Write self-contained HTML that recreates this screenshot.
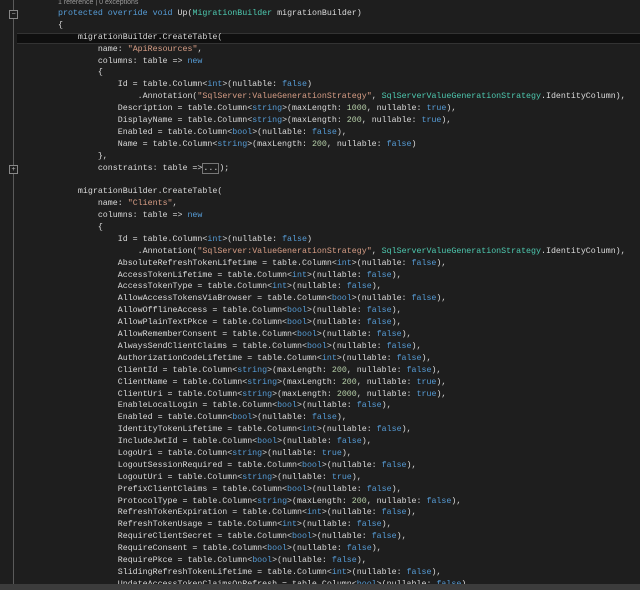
<!DOCTYPE html>
<html><head><meta charset="utf-8"><style>
html,body{margin:0;padding:0;background:#1e1e1e;width:640px;height:590px;overflow:hidden}
body{position:relative;font-family:"Liberation Mono",monospace;font-size:8.3px;color:#dadada}
.ref{position:absolute;left:58px;top:-1px;font-family:"Liberation Sans",sans-serif;font-size:7px;color:#999}
.code{position:absolute;left:58px;top:8px;white-space:pre;line-height:11.89px}
.k{color:#569cd6}.t{color:#4ec9b0}.s{color:#d69d85}.n{color:#b5cea8}
.vl{position:absolute;left:13px;top:0;width:1px;height:584px;background:#5a5a5a}
.fold{position:absolute;left:9px;width:7px;height:7px;border:1px solid #888;background:#1e1e1e;color:#bbb;font:7px/7px "Liberation Sans",sans-serif;text-align:center}
.cur{position:absolute;left:17px;top:33px;width:623px;height:9px;background:#0f0f0f;border-top:1px solid #333;border-bottom:1px solid #333}
.bot{position:absolute;left:0;top:584px;width:640px;height:6px;background:#3c3c3c}
.box{border:1px solid #777}
</style></head><body>
<div class="cur"></div>
<div class="vl"></div>
<div class="fold" style="top:10px">−</div>
<div class="fold" style="top:165px">+</div>
<div class="ref">1 reference | 0 exceptions</div>
<div class="code"><span class="k">protected</span> <span class="k">override</span> <span class="k">void</span> Up(<span class="t">MigrationBuilder</span> migrationBuilder)
{
    migrationBuilder.CreateTable(
        name: <span class="s">"ApiResources"</span>,
        columns: table =&gt; <span class="k">new</span>
        {
            Id = table.Column&lt;<span class="k">int</span>&gt;(nullable: <span class="k">false</span>)
                .Annotation(<span class="s">"SqlServer:ValueGenerationStrategy"</span>, <span class="t">SqlServerValueGenerationStrategy</span>.IdentityColumn),
            Description = table.Column&lt;<span class="k">string</span>&gt;(maxLength: <span class="n">1000</span>, nullable: <span class="k">true</span>),
            DisplayName = table.Column&lt;<span class="k">string</span>&gt;(maxLength: <span class="n">200</span>, nullable: <span class="k">true</span>),
            Enabled = table.Column&lt;<span class="k">bool</span>&gt;(nullable: <span class="k">false</span>),
            Name = table.Column&lt;<span class="k">string</span>&gt;(maxLength: <span class="n">200</span>, nullable: <span class="k">false</span>)
        },
        constraints: table =&gt;<span class="box">...</span>);

    migrationBuilder.CreateTable(
        name: <span class="s">"Clients"</span>,
        columns: table =&gt; <span class="k">new</span>
        {
            Id = table.Column&lt;<span class="k">int</span>&gt;(nullable: <span class="k">false</span>)
                .Annotation(<span class="s">"SqlServer:ValueGenerationStrategy"</span>, <span class="t">SqlServerValueGenerationStrategy</span>.IdentityColumn),
            AbsoluteRefreshTokenLifetime = table.Column&lt;<span class="k">int</span>&gt;(nullable: <span class="k">false</span>),
            AccessTokenLifetime = table.Column&lt;<span class="k">int</span>&gt;(nullable: <span class="k">false</span>),
            AccessTokenType = table.Column&lt;<span class="k">int</span>&gt;(nullable: <span class="k">false</span>),
            AllowAccessTokensViaBrowser = table.Column&lt;<span class="k">bool</span>&gt;(nullable: <span class="k">false</span>),
            AllowOfflineAccess = table.Column&lt;<span class="k">bool</span>&gt;(nullable: <span class="k">false</span>),
            AllowPlainTextPkce = table.Column&lt;<span class="k">bool</span>&gt;(nullable: <span class="k">false</span>),
            AllowRememberConsent = table.Column&lt;<span class="k">bool</span>&gt;(nullable: <span class="k">false</span>),
            AlwaysSendClientClaims = table.Column&lt;<span class="k">bool</span>&gt;(nullable: <span class="k">false</span>),
            AuthorizationCodeLifetime = table.Column&lt;<span class="k">int</span>&gt;(nullable: <span class="k">false</span>),
            ClientId = table.Column&lt;<span class="k">string</span>&gt;(maxLength: <span class="n">200</span>, nullable: <span class="k">false</span>),
            ClientName = table.Column&lt;<span class="k">string</span>&gt;(maxLength: <span class="n">200</span>, nullable: <span class="k">true</span>),
            ClientUri = table.Column&lt;<span class="k">string</span>&gt;(maxLength: <span class="n">2000</span>, nullable: <span class="k">true</span>),
            EnableLocalLogin = table.Column&lt;<span class="k">bool</span>&gt;(nullable: <span class="k">false</span>),
            Enabled = table.Column&lt;<span class="k">bool</span>&gt;(nullable: <span class="k">false</span>),
            IdentityTokenLifetime = table.Column&lt;<span class="k">int</span>&gt;(nullable: <span class="k">false</span>),
            IncludeJwtId = table.Column&lt;<span class="k">bool</span>&gt;(nullable: <span class="k">false</span>),
            LogoUri = table.Column&lt;<span class="k">string</span>&gt;(nullable: <span class="k">true</span>),
            LogoutSessionRequired = table.Column&lt;<span class="k">bool</span>&gt;(nullable: <span class="k">false</span>),
            LogoutUri = table.Column&lt;<span class="k">string</span>&gt;(nullable: <span class="k">true</span>),
            PrefixClientClaims = table.Column&lt;<span class="k">bool</span>&gt;(nullable: <span class="k">false</span>),
            ProtocolType = table.Column&lt;<span class="k">string</span>&gt;(maxLength: <span class="n">200</span>, nullable: <span class="k">false</span>),
            RefreshTokenExpiration = table.Column&lt;<span class="k">int</span>&gt;(nullable: <span class="k">false</span>),
            RefreshTokenUsage = table.Column&lt;<span class="k">int</span>&gt;(nullable: <span class="k">false</span>),
            RequireClientSecret = table.Column&lt;<span class="k">bool</span>&gt;(nullable: <span class="k">false</span>),
            RequireConsent = table.Column&lt;<span class="k">bool</span>&gt;(nullable: <span class="k">false</span>),
            RequirePkce = table.Column&lt;<span class="k">bool</span>&gt;(nullable: <span class="k">false</span>),
            SlidingRefreshTokenLifetime = table.Column&lt;<span class="k">int</span>&gt;(nullable: <span class="k">false</span>),
            UpdateAccessTokenClaimsOnRefresh = table.Column&lt;<span class="k">bool</span>&gt;(nullable: <span class="k">false</span>),</div>
<div class="bot"></div>
</body></html>
